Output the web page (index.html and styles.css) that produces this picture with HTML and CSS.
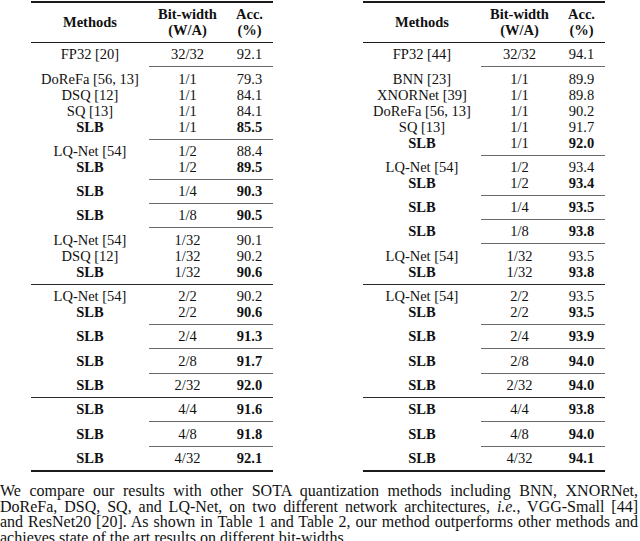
FILE: index.html
```html
<!DOCTYPE html>
<html lang="en">
<head>
<meta charset="utf-8">
<title>Results</title>
<link rel="stylesheet" href="styles.css">
</head>
<body>
<main class="page">
  <div class="tables">
    <table class="results">
      <colgroup><col class="c-method"><col class="c-bits"><col class="c-acc"></colgroup>
      <thead>
        <tr><th>Methods</th><th>Bit-width<br>(W/A)</th><th>Acc.<br>(%)</th></tr>
      </thead>
      <tbody class="first">
        <tr><td>FP32 [20]</td><td>32/32</td><td>92.1</td></tr>
      </tbody>
      <tbody class="sub">
        <tr><td>DoReFa [56, 13]</td><td>1/1</td><td>79.3</td></tr>
        <tr><td>DSQ [12]</td><td>1/1</td><td>84.1</td></tr>
        <tr><td>SQ [13]</td><td>1/1</td><td>84.1</td></tr>
        <tr class="ours"><td>SLB</td><td>1/1</td><td>85.5</td></tr>
      </tbody>
      <tbody class="sub">
        <tr><td>LQ-Net [54]</td><td>1/2</td><td>88.4</td></tr>
        <tr class="ours"><td>SLB</td><td>1/2</td><td>89.5</td></tr>
      </tbody>
      <tbody class="sub">
        <tr class="ours"><td>SLB</td><td>1/4</td><td>90.3</td></tr>
      </tbody>
      <tbody class="sub">
        <tr class="ours"><td>SLB</td><td>1/8</td><td>90.5</td></tr>
      </tbody>
      <tbody class="sub">
        <tr><td>LQ-Net [54]</td><td>1/32</td><td>90.1</td></tr>
        <tr><td>DSQ [12]</td><td>1/32</td><td>90.2</td></tr>
        <tr class="ours"><td>SLB</td><td>1/32</td><td>90.6</td></tr>
      </tbody>
      <tbody class="full">
        <tr><td>LQ-Net [54]</td><td>2/2</td><td>90.2</td></tr>
        <tr class="ours"><td>SLB</td><td>2/2</td><td>90.6</td></tr>
      </tbody>
      <tbody class="sub">
        <tr class="ours"><td>SLB</td><td>2/4</td><td>91.3</td></tr>
      </tbody>
      <tbody class="sub">
        <tr class="ours"><td>SLB</td><td>2/8</td><td>91.7</td></tr>
      </tbody>
      <tbody class="sub">
        <tr class="ours"><td>SLB</td><td>2/32</td><td>92.0</td></tr>
      </tbody>
      <tbody class="full">
        <tr class="ours"><td>SLB</td><td>4/4</td><td>91.6</td></tr>
      </tbody>
      <tbody class="sub">
        <tr class="ours"><td>SLB</td><td>4/8</td><td>91.8</td></tr>
      </tbody>
      <tbody class="sub">
        <tr class="ours"><td>SLB</td><td>4/32</td><td>92.1</td></tr>
      </tbody>
    </table>

    <table class="results">
      <colgroup><col class="c-method"><col class="c-bits"><col class="c-acc"></colgroup>
      <thead>
        <tr><th>Methods</th><th>Bit-width<br>(W/A)</th><th>Acc.<br>(%)</th></tr>
      </thead>
      <tbody class="first">
        <tr><td>FP32 [44]</td><td>32/32</td><td>94.1</td></tr>
      </tbody>
      <tbody class="sub">
        <tr><td>BNN [23]</td><td>1/1</td><td>89.9</td></tr>
        <tr><td>XNORNet [39]</td><td>1/1</td><td>89.8</td></tr>
        <tr><td>DoReFa [56, 13]</td><td>1/1</td><td>90.2</td></tr>
        <tr><td>SQ [13]</td><td>1/1</td><td>91.7</td></tr>
        <tr class="ours"><td>SLB</td><td>1/1</td><td>92.0</td></tr>
      </tbody>
      <tbody class="sub">
        <tr><td>LQ-Net [54]</td><td>1/2</td><td>93.4</td></tr>
        <tr class="ours"><td>SLB</td><td>1/2</td><td>93.4</td></tr>
      </tbody>
      <tbody class="sub">
        <tr class="ours"><td>SLB</td><td>1/4</td><td>93.5</td></tr>
      </tbody>
      <tbody class="sub">
        <tr class="ours"><td>SLB</td><td>1/8</td><td>93.8</td></tr>
      </tbody>
      <tbody class="sub">
        <tr><td>LQ-Net [54]</td><td>1/32</td><td>93.5</td></tr>
        <tr class="ours"><td>SLB</td><td>1/32</td><td>93.8</td></tr>
      </tbody>
      <tbody class="full">
        <tr><td>LQ-Net [54]</td><td>2/2</td><td>93.5</td></tr>
        <tr class="ours"><td>SLB</td><td>2/2</td><td>93.5</td></tr>
      </tbody>
      <tbody class="sub">
        <tr class="ours"><td>SLB</td><td>2/4</td><td>93.9</td></tr>
      </tbody>
      <tbody class="sub">
        <tr class="ours"><td>SLB</td><td>2/8</td><td>94.0</td></tr>
      </tbody>
      <tbody class="sub">
        <tr class="ours"><td>SLB</td><td>2/32</td><td>94.0</td></tr>
      </tbody>
      <tbody class="full">
        <tr class="ours"><td>SLB</td><td>4/4</td><td>93.8</td></tr>
      </tbody>
      <tbody class="sub">
        <tr class="ours"><td>SLB</td><td>4/8</td><td>94.0</td></tr>
      </tbody>
      <tbody class="sub">
        <tr class="ours"><td>SLB</td><td>4/32</td><td>94.1</td></tr>
      </tbody>
    </table>
  </div>

  <p class="text">
    <span class="line">We compare our results with other SOTA quantization methods including BNN, XNORNet,</span>
    <span class="line">DoReFa, DSQ, SQ, and LQ-Net, on two different network architectures, <i>i.e.</i>, VGG-Small [44]</span>
    <span class="line">and ResNet20 [20]. As shown in Table 1 and Table 2, our method outperforms other methods and</span>
    <span class="line last">achieves state of the art results on different bit-widths.</span>
  </p>
</main>
</body>
</html>
```

FILE: styles.css
```css
html, body {
  margin: 0;
  padding: 0;
  background: #ffffff;
}

.page {
  width: 640px;
  height: 541px;
  overflow: hidden;
  color: #111111;
  font-family: "Liberation Serif", "Times New Roman", serif;
}

.tables {
  display: flex;
  gap: 90px;
  padding: 1px 0 0 31px;
}

.results {
  border-collapse: separate;
  border-spacing: 0;
  table-layout: fixed;
  width: 242px;
  font-size: 14.5px;
  line-height: 16px;
  border-top: 2px solid #1a1a1a;
  border-bottom: 2px solid #1a1a1a;
  text-align: center;
}

.c-method { width: 118px; }
.c-bits { width: 77px; }
.c-acc { width: 47px; }

.results th {
  font-weight: bold;
  padding: 3px 0 4px;
  border-bottom: 1px solid #1a1a1a;
  vertical-align: middle;
}

.results td {
  padding: 0;
  vertical-align: baseline;
  white-space: nowrap;
}

.results tbody tr:first-child td {
  padding-top: 3.3px;
  border-top: 1px solid #2a2a2a;
}

.results tbody.sub tr:first-child td {
  border-top-color: #6a6a6a;
}

.results tbody.sub tr:first-child td:first-child {
  border-top-color: transparent;
}

.results tbody.first tr:first-child td {
  border-top: 0;
}

.results tbody tr:last-child td {
  padding-bottom: 4px;
}

.results tr.ours td:first-child,
.results tr.ours td:last-child {
  font-weight: bold;
}

.text {
  margin: 11px 0 0 0;
  width: 638px;
  font-size: 16px;
  line-height: 15.8px;
}

.line {
  display: block;
  text-align: justify;
  text-align-last: justify;
}

.line.last {
  text-align-last: left;
}
```
